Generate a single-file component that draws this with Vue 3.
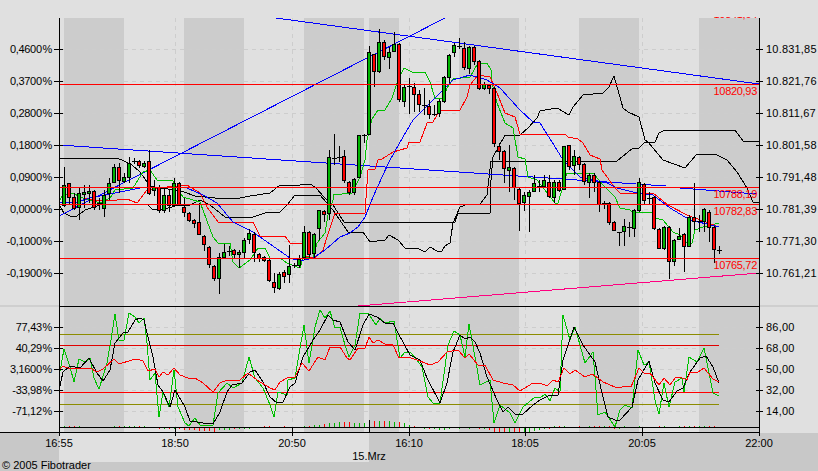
<script setup>
const raw = `64,185,205,167,207,g|69,183,197,183,205,r|74,197,208,193,210,r|79,193,207,187,220,g|84,192,194,185,208,g|89,191,193,185,203,g|94,191,207,190,210,r|99,203,203,198,210,d|104,195,208,190,217,g|109,183,193,178,200,g|114,167,182,164,183,g|119,167,180,163,193,r|124,177,181,173,183,g|129,163,177,157,183,g|134,161,161,158,164,d|139,161,165,160,168,r|144,163,166,161,168,g|149,161,193,150,195,r|154,187,190,180,196,g|159,187,210,185,213,r|164,195,210,188,213,g|169,195,205,190,212,r|174,183,205,178,207,g|179,183,204,182,206,r|184,207,212,198,217,r|189,213,220,212,222,r|194,220,223,219,228,r|199,222,234,203,235,r|204,236,244,235,251,r|209,247,264,246,268,r|214,266,278,265,281,r|219,257,278,253,294,g|224,252,257,244,258,g|229,251,251,246,256,d|234,250,254,249,258,r|239,252,254,250,268,g|244,240,252,238,258,g|249,233,239,229,244,g|254,234,252,232,262,r|259,254,258,253,262,r|264,257,260,256,262,r|269,260,280,259,282,r|274,282,287,273,293,r|279,274,288,272,290,g|284,272,276,270,283,r|289,266,274,245,283,g|294,265,265,263,268,d|299,259,265,255,268,g|304,232,257,226,260,g|309,232,254,231,258,r|314,234,253,233,258,g|319,210,228,210,240,g|324,211,214,210,222,r|329,157,213,150,220,g|334,158,158,134,165,d|339,157,157,146,162,d|344,156,180,150,183,r|349,182,192,181,195,r|354,179,192,178,195,g|359,135,177,135,177,g|364,135,135,134,143,d|369,52,134,46,134,g|374,54,71,54,87,r|379,42,71,29,73,g|384,42,56,40,60,r|389,52,57,47,69,g|394,44,51,32,52,g|399,44,99,43,102,r|404,87,101,85,107,g|409,86,86,78,114,d|414,87,94,83,112,r|419,94,104,90,112,r|424,105,105,88,115,d|429,106,114,100,119,r|434,114,114,105,116,d|439,101,113,99,117,g|444,77,101,76,103,g|449,55,77,54,83,g|454,45,52,43,57,g|459,46,46,38,49,d|464,48,67,42,70,r|469,47,68,46,74,g|474,47,61,46,65,r|479,61,88,60,90,r|484,84,88,82,90,g|489,85,88,84,94,r|494,88,143,87,147,r|499,146,151,143,160,r|504,151,168,150,183,r|509,167,170,145,192,g|514,168,187,167,200,r|519,189,203,188,231,r|524,195,202,192,211,g|529,192,196,190,232,g|534,183,191,175,192,g|539,186,186,180,192,d|544,180,186,175,188,g|549,182,196,175,198,r|554,182,197,180,203,g|559,182,190,180,192,r|564,146,189,146,190,g|569,145,166,145,170,r|574,156,165,150,175,g|579,157,164,156,170,r|584,164,181,163,185,r|589,175,182,173,198,g|594,175,182,173,192,r|599,182,204,181,212,r|604,203,203,201,209,d|609,203,222,202,225,r|614,222,230,221,231,r|619,232,232,232,246,d|624,226,231,219,246,g|629,227,227,222,237,d|634,210,228,209,237,g|639,182,210,178,212,g|644,184,200,183,204,r|649,198,198,192,205,d|654,197,228,196,230,r|659,229,248,228,249,r|664,227,248,226,250,g|669,227,261,226,279,r|674,240,261,239,266,g|679,236,239,228,240,g|684,234,246,233,272,r|689,217,246,215,247,g|694,217,221,183,230,r|699,221,221,215,232,d|704,209,221,208,232,g|709,212,227,210,242,r|714,227,249,226,263,r|719,250,250,246,254,d`

const candles = raw.split('|').map((s) => {
  const p = s.split(',')
  const n = p.slice(0, 5).map(Number)
  return { x: n[0], top: n[1], bot: n[2], hi: n[3], lo: n[4], kind: p[5] }
})
const fills = { g: '#00b400', r: '#ff0000', d: '#000000' }

const vols = [1,1,1,1,0,0,0,0,0,0,1,1,1,1,1,1,1,0,0,-1,-1,-1,-1,-1,-2,-2,-2,-3,-3,-3,-4,-2,-2,-2,-1,-1,-1,-1,0,0,1,1,0,0,1,0,0,0,1,1,2,2,3,4,4,5,5,5,4,4,4,5,6,6,6,6,5,5,4,2,1,0,-1,-1,-1,-2,-2,-1,0,-1,0,-1,0,-1,-1,-2,-5,-5,-5,-5,-5,-5,-4,-4,-3,-2,-1,-1,1,1,1,0,0,1,0,1,1,1,1,1,-1,-1,1,0,0,1,0,0,0,1,1,0,0,1,1,1,1,1,1,1,1,0,0,0]
const volBars = candles.map((c, i) => ({ x: c.x, h: vols[i] || 0, color: c.kind === 'r' ? '#ff0000' : '#00b400' }))

const bands = [[64, 60], [184, 60], [304, 60], [369, 30], [459, 60], [579, 60], [699, 60]]
const gridX = [175, 292, 409, 525, 642]
const gridY = [49, 81, 113, 145, 177, 209, 241, 273, 327, 348, 369, 390, 411]

const leftLabels = [
  ['0,4600 %', 53], ['0,3700 %', 85], ['0,2800 %', 117], ['0,1800 %', 149],
  ['0,0900 %', 181], ['0,0000 %', 213], ['-0,1000 %', 245], ['-0,1900 %', 277],
  ['77,43 %', 331], ['40,29 %', 352], ['3,1600 %', 373], ['-33,98 %', 394], ['-71,12 %', 415]
]
const rightLabels = [
  ['10.831,85', 53], ['10.821,76', 85], ['10.811,67', 117], ['10.801,58', 149],
  ['10.791,48', 181], ['10.781,39', 213], ['10.771,30', 245], ['10.761,21', 277],
  ['86,00', 331], ['68,00', 352], ['50,00', 373], ['32,00', 394], ['14,00', 415]
]
const priceLabels = [['10820,93', 95], ['10788,19', 198], ['10782,83', 215], ['10765,72', 269]]
const timeLabels = [['16:55', 59], ['18:50', 175], ['20:50', 292], ['16:10', 409], ['18:05', 525], ['20:05', 642], ['22:00', 759]]

const mainLines = [
  { c: '#000', p: '59,158 117,158 124,161 132,165 140,172 150,186 160,188 175,190 184,192 195,196 205,197 215,198 235,199 250,196 270,193 280,185 290,186 310,184 315,187 325,198 333,205 344,222 455,222 458,213 490,213 491,180 493,157 505,135 520,135 528,128 537,118 540,111 545,110 557,108 569,115 573,107 583,95 603,93 609,87 614,76 623,108 628,112 639,117 645,140 648,142 663,160 685,168 697,154 715,154 727,160 737,172 747,188 753,202 759,202' },
  { c: '#000', p: '59,205 64,213 70,216 75,217 80,214 85,210 100,205 110,204 130,205 147,204 152,209 165,209 175,206 190,205 200,200 210,205 225,217 253,217 265,213 270,212 280,212 287,205 295,195 320,195 333,210 348,232 363,232 370,242 385,240 389,235 398,240 405,248 417,248 425,252 430,247 437,251 442,251 445,246 450,243 453,223 460,207 468,204 480,204 487,195 491,161 617,161 633,148 639,148 645,142 655,142 659,133 665,130 735,130 743,141 759,141' },
  { c: '#0000ff', p: '276,18 759,84' },
  { c: '#0000ff', p: '59,145 666,186' },
  { c: '#0000ff', p: '680,188 757,194' },
  { c: '#0000ff', p: '59,216 445,18' },
  { c: '#ff0080', p: '358,306 759,273' },
  { c: '#00c000', p: '60,200 63,195 73,193 80,197 83,198 100,203 110,198 115,190 133,188 143,172 150,170 157,180 173,181 183,197 193,200 200,202 213,237 218,243 230,243 233,262 239,268 250,260 258,248 265,248 270,258 280,258 287,263 300,268 303,258 313,257 317,243 325,233 328,215 333,200 333,195 352,193 360,177 365,160 367,140 372,119 378,110 385,110 392,98 397,83 404,68 412,72 425,72 430,82 435,98 443,98 447,88 453,79 470,77 478,63 487,63 491,70 492,83 497,103 505,123 513,128 518,157 525,159 528,177 537,180 555,203 558,203 567,173 583,173 593,173 603,185 615,197 620,208 630,210 633,213 637,212 652,212 655,218 663,220 673,232 680,235 687,243 692,243 695,230 703,227 719,223' },
  { c: '#ff0000', p: '85,198 93,200 117,200 127,199 137,203 147,190 160,188 167,187 187,185 200,193 207,207 218,222 253,222 260,236 285,236 290,243 302,243 303,256 315,258 323,250 327,237 335,213 365,213 368,170 375,169 378,160 382,159 393,152 407,148 409,142 420,142 427,123 433,122 440,110 460,110 467,97 470,85 478,75 490,77 497,93 505,113 515,117 520,134 565,134 568,137 578,139 583,143 590,155 600,159 602,170 615,188 620,193 653,193 668,205 687,215 719,227' },
  { c: '#0000ff', p: '60,202 77,202 90,198 115,193 140,188 155,187 173,187 187,188 203,195 217,203 233,222 253,232 270,244 290,258 300,261 313,258 325,250 340,237 350,233 358,227 365,217 373,197 382,177 390,160 403,137 413,120 427,106 443,90 453,80 470,75 487,80 500,88 520,110 533,122 540,123 557,150 563,160 580,177 607,183 617,188 637,193 653,195 670,208 690,220 719,227' }
]

const subLines = [
  { c: '#00c000', p: '59,377 64,349 70,367 74,382 79,359 85,362 90,358 94,378 99,389 107,363 111,340 115,314 119,340 124,340 129,313 135,317 139,323 144,318 147,343 150,380 155,373 159,417 163,392 169,407 174,370 178,407 185,423 189,426 195,418 200,425 213,425 218,393 227,383 233,388 242,383 249,357 255,378 263,388 270,405 274,417 278,392 287,395 288,380 295,378 298,360 304,325 309,363 315,327 320,310 325,318 330,311 335,328 340,327 345,345 349,357 355,345 360,313 368,313 376,325 380,318 385,323 394,321 400,358 405,352 410,352 417,360 422,367 428,397 433,403 440,403 448,345 454,331 460,335 465,357 469,324 480,385 490,380 494,423 500,405 510,413 515,423 523,407 535,397 540,398 545,394 550,401 555,388 560,392 563,315 570,340 575,327 585,363 593,352 598,415 605,412 615,427 620,410 625,405 632,408 638,350 644,365 649,362 655,400 659,414 664,383 669,407 675,382 682,378 684,392 689,357 697,362 704,348 713,393 719,396' },
  { c: '#000', p: '59,390 63,372 70,366 80,368 89,358 97,373 103,381 110,370 115,343 123,333 128,332 135,320 140,318 144,320 147,333 153,357 158,385 163,392 170,407 175,390 185,407 190,421 203,423 213,424 220,412 227,392 232,385 242,383 250,372 255,370 263,382 270,397 277,403 283,402 290,387 295,383 303,357 313,340 320,330 328,315 333,320 340,322 348,342 355,350 363,325 369,314 377,317 385,323 393,323 398,333 410,355 420,360 427,378 440,403 447,383 453,352 460,335 465,339 470,337 475,342 480,353 487,377 497,400 503,412 508,407 515,414 523,414 533,405 540,400 550,395 558,395 563,360 574,327 583,345 595,362 602,393 608,417 615,420 620,420 632,407 638,380 649,361 655,383 663,400 669,402 677,391 683,388 690,372 700,358 706,356 713,367 719,383' },
  { c: '#ff0000', p: '59,370 63,366 70,369 80,368 90,368 97,372 103,369 114,359 119,364 132,360 137,359 143,361 148,371 155,369 159,377 163,372 168,375 174,368 180,375 188,378 195,378 203,383 213,392 220,383 227,380 240,380 248,373 257,380 270,388 275,390 280,382 287,378 295,377 302,363 309,371 318,357 325,360 330,347 340,347 347,358 350,360 358,348 365,348 369,337 373,343 378,340 385,344 393,345 399,358 408,357 420,361 430,365 438,362 447,352 458,350 465,358 469,354 478,365 485,365 493,380 503,383 513,385 520,391 533,383 540,383 547,386 553,380 558,382 564,368 570,374 575,370 585,377 592,374 598,378 603,382 615,387 622,387 625,386 631,387 639,368 644,373 650,373 659,385 664,378 670,385 675,378 680,377 687,380 690,372 698,372 704,368 713,379 719,382' }
]
</script>

<template>
  <div class="page">
    <svg class="chart" width="818" height="471" viewBox="0 0 818 471" xmlns="http://www.w3.org/2000/svg">
      <defs>
        <clipPath id="plot"><rect x="60" y="17" width="699" height="415" /></clipPath>
      </defs>

      <rect width="818" height="471" fill="#e0e0e0" />
      <rect y="305" width="59" height="2" fill="#cfcfcf" />
      <rect x="760" y="305" width="58" height="2" fill="#cfcfcf" />
      <rect y="433" width="59" height="38" fill="#c8c8c8" />
      <rect x="369" y="433" width="449" height="38" fill="#c8c8c8" />
      <rect x="59" y="462" width="310" height="9" fill="#c8c8c8" />

      <rect v-for="b in bands" :key="b[0]" :x="b[0]" y="18" :width="b[1]" height="414" fill="#cccccc" />

      <g stroke="#cdcdcd" stroke-dasharray="4 4" shape-rendering="crispEdges">
        <line v-for="x in gridX" :key="x" :x1="x + 0.5" :x2="x + 0.5" y1="18" y2="432" />
        <line v-for="y in gridY" :key="y" x1="60" x2="759" :y1="y + 0.5" :y2="y + 0.5" />
      </g>

      <g clip-path="url(#plot)">
        <text x="757" y="18" class="price">10841,64</text>
        <polyline v-for="(l, i) in mainLines" :key="i" :points="l.p" fill="none" :stroke="l.c" stroke-width="1" shape-rendering="crispEdges" />
        <g shape-rendering="crispEdges">
          <g v-for="c in candles" :key="c.x">
            <line :x1="c.x + 0.5" :x2="c.x + 0.5" :y1="c.hi" :y2="c.lo" stroke="#000" />
            <line v-if="c.kind === 'd'" :x1="c.x - 2" :x2="c.x + 3" :y1="c.top + 0.5" :y2="c.top + 0.5" stroke="#000" />
            <rect v-else :x="c.x - 1.5" :y="c.top + 0.5" width="3" :height="c.bot - c.top" :fill="fills[c.kind]" stroke="#000" />
          </g>
        </g>
        <g stroke="#ff0000" shape-rendering="crispEdges">
          <line x1="59" x2="759" y1="84.5" y2="84.5" />
          <line x1="59" x2="759" y1="187.5" y2="187.5" />
          <line x1="59" x2="759" y1="204.5" y2="204.5" />
          <line x1="59" x2="759" y1="258.5" y2="258.5" />
        </g>
        <text v-for="p in priceLabels" :key="p[0]" x="757" :y="p[1]" class="price">{{ p[0] }}</text>

        <g shape-rendering="crispEdges">
          <line x1="59" x2="719" y1="334.5" y2="334.5" stroke="#8c8c00" />
          <line x1="59" x2="719" y1="345.5" y2="345.5" stroke="#e00000" />
          <line x1="59" x2="719" y1="392.5" y2="392.5" stroke="#ff0000" />
          <line x1="59" x2="719" y1="404.5" y2="404.5" stroke="#8c8c00" />
        </g>
        <polyline v-for="(l, i) in subLines" :key="'s' + i" :points="l.p" fill="none" :stroke="l.c" stroke-width="1" shape-rendering="crispEdges" />
        <g shape-rendering="crispEdges">
          <line v-for="v in volBars" :key="v.x" :x1="v.x + 0.5" :x2="v.x + 0.5" :y1="v.h < 0 ? 428 : 427" :y2="v.h < 0 ? 428 - v.h : 427 - v.h" :stroke="v.color" />
          <line x1="369.5" x2="369.5" y1="420" y2="432" stroke="#000" />
        </g>
      </g>

      <g stroke="#000" shape-rendering="crispEdges">
        <line x1="59" x2="759" y1="306.5" y2="306.5" />
        <line x1="59" x2="759" y1="427.5" y2="427.5" />
        <line x1="0" x2="759" y1="432.5" y2="432.5" />
        <line x1="59.5" x2="59.5" y1="18" y2="436" />
        <line x1="759.5" x2="759.5" y1="18" y2="436" />
        <line v-for="y in gridY" :key="'tl' + y" x1="54" x2="63" :y1="y + 0.5" :y2="y + 0.5" />
        <line v-for="y in gridY" :key="'tr' + y" x1="756" x2="763" :y1="y + 0.5" :y2="y + 0.5" />
        <line v-for="x in gridX" :key="'tb' + x" :x1="x + 0.5" :x2="x + 0.5" y1="428" y2="436" />
      </g>

      <text v-for="l in leftLabels" :key="l[0]" x="52" :y="l[1]" class="axis left">{{ l[0] }}</text>
      <text v-for="l in rightLabels" :key="l[0]" x="766" :y="l[1]" class="axis right">{{ l[0] }}</text>
      <text v-for="t in timeLabels" :key="t[0]" :x="t[1]" y="447" class="axis time">{{ t[0] }}</text>
      <text x="369" y="460" class="axis time">15.Mrz</text>
      <text x="2" y="469" class="axis copy">© 2005 Fibotrader</text>
    </svg>
  </div>
</template>

<style scoped>
.page {
  width: 818px;
  height: 471px;
  overflow: hidden;
}
.chart {
  display: block;
}
.axis {
  font-family: "Liberation Sans", Arial, sans-serif;
  font-size: 11px;
  fill: #000;
}
.left {
  text-anchor: end;
  letter-spacing: -0.3px;
  word-spacing: -2px;
}
.right {
  text-anchor: start;
  letter-spacing: 0.2px;
}
.time {
  text-anchor: middle;
}
.price {
  font-family: "Liberation Sans", Arial, sans-serif;
  font-size: 11px;
  letter-spacing: -0.3px;
  fill: #ff0000;
  text-anchor: end;
}
</style>
<style>
html,
body {
  margin: 0;
  background: #e0e0e0;
}
</style>
